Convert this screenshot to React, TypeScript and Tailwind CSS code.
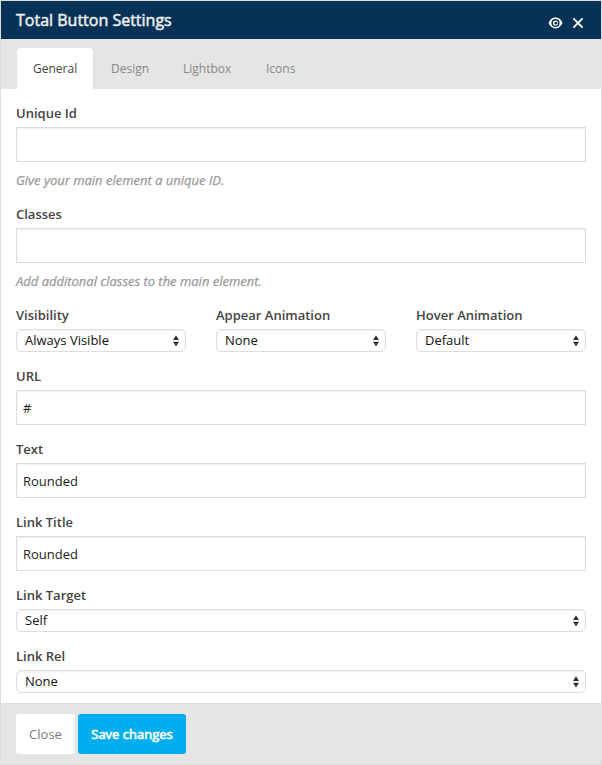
import { ReactNode } from "react";

function Label({ children }: { children: ReactNode }) {
  return (
    <div className="mb-[5px] h-[18px] text-[13px] leading-[18px] font-semibold text-[#444]">
      <span>{children}</span>
    </div>
  );
}

function TextField({ label, value, hint }: { label: string; value?: string; hint?: string }) {
  return (
    <div>
      <Label>{label}</Label>
      <div className="flex h-[35px] items-center border border-[#ddd] bg-white px-1.5 pt-0.5 text-[13px] text-[#222] shadow-[inset_0_1px_2px_rgba(0,0,0,0.07)]">
        {value}
      </div>
      {hint && (
        <p className="mt-[9px] mb-px h-[18px] text-[13px] leading-[18px] tracking-[-0.01px] text-[#999] italic [-webkit-text-stroke:0.25px_#999]">
          {hint}
        </p>
      )}
    </div>
  );
}

function SelectField({ label, value }: { label: string; value: string }) {
  return (
    <div className="min-w-0 flex-1">
      <Label>{label}</Label>
      <div className="flex h-[23px] items-center justify-between rounded-[5px] border border-[#ddd] bg-white pr-[6px] pl-2 text-[13px] text-[#111] shadow-[inset_0_1px_2px_rgba(0,0,0,0.07)]">
        <span>{value}</span>
        <svg width="6" height="12" viewBox="0 0 6 12" fill="#333">
          <path d="M3 0.3 6 5H0Z" />
          <path d="M3 11.4 6 6.8H0Z" />
        </svg>
      </div>
    </div>
  );
}

export default function App() {
  return (
    <div className="flex h-[765px] w-[602px] flex-col border border-[#ddd] bg-white font-['Open_Sans','Noto_Sans',sans-serif]">
      <header className="flex h-[38px] shrink-0 items-center justify-between bg-[#073257] pr-[17px] pl-[15px] text-[#eee]">
        <h1 className="text-base leading-[38px] font-normal [-webkit-text-stroke:0.5px_#eee]">Total Button Settings</h1>
        <div className="flex items-center gap-[9px] pt-[5px]">
          <svg width="15" height="12" viewBox="0 0 15 12">
            <path d="M0.5 6C2 2.4 4.6 0.6 7.5 0.6S13 2.4 14.5 6C13 9.6 10.4 11.4 7.5 11.4S2 9.6 0.5 6Z" fill="#fff" />
            <circle cx="7.5" cy="6" r="3.3" fill="none" stroke="#073257" strokeWidth="1.5" />
            <circle cx="7.9" cy="6.2" r="1.4" fill="#073257" />
          </svg>
          <svg width="12" height="12" viewBox="0 0 12 12" fill="none" stroke="#fff" strokeWidth="1.9">
            <path d="M1.4 1.4 10.6 10.6M10.6 1.4 1.4 10.6" />
          </svg>
        </div>
      </header>

      <nav className="flex h-[50px] shrink-0 items-end bg-[#e5e5e5] pl-4 text-xs text-[#888]">
        <div className="h-[41px] w-[76px] rounded-t-[4px] bg-white pl-4 leading-[41px] text-[#444]">General</div>
        <div className="h-[41px] w-[72px] pl-[18px] leading-[41px]">Design</div>
        <div className="h-[41px] w-[83px] pl-[18px] leading-[41px]">Lightbox</div>
        <div className="h-[41px] pl-[18px] leading-[41px]">Icons</div>
      </nav>

      <main className="flex flex-1 flex-col gap-[15px] px-[15px] pt-[15px]">
        <TextField label="Unique Id" hint="Give your main element a unique ID." />
        <TextField label="Classes" hint="Add additonal classes to the main element." />
        <div className="flex gap-[30px]">
          <SelectField label="Visibility" value="Always Visible" />
          <SelectField label="Appear Animation" value="None" />
          <SelectField label="Hover Animation" value="Default" />
        </div>
        <TextField label="URL" value="#" />
        <TextField label="Text" value="Rounded" />
        <TextField label="Link Title" value="Rounded" />
        <div className="flex">
          <SelectField label="Link Target" value="Self" />
        </div>
        <div className="flex">
          <SelectField label="Link Rel" value="None" />
        </div>
      </main>

      <footer className="flex h-[61px] shrink-0 gap-[3px] border-t border-[#ddd] bg-[#e5e5e5] px-[15px] pt-[10px]">
        <button className="h-10 w-[59px] rounded-[3px] bg-white pt-0.5 text-[13px] text-[#777]">Close</button>
        <button className="h-10 w-[108px] rounded-[3px] bg-[#00aef0] pt-0.5 text-[13px] text-white [-webkit-text-stroke:0.6px_#fff]">
          Save changes
        </button>
      </footer>
    </div>
  );
}
